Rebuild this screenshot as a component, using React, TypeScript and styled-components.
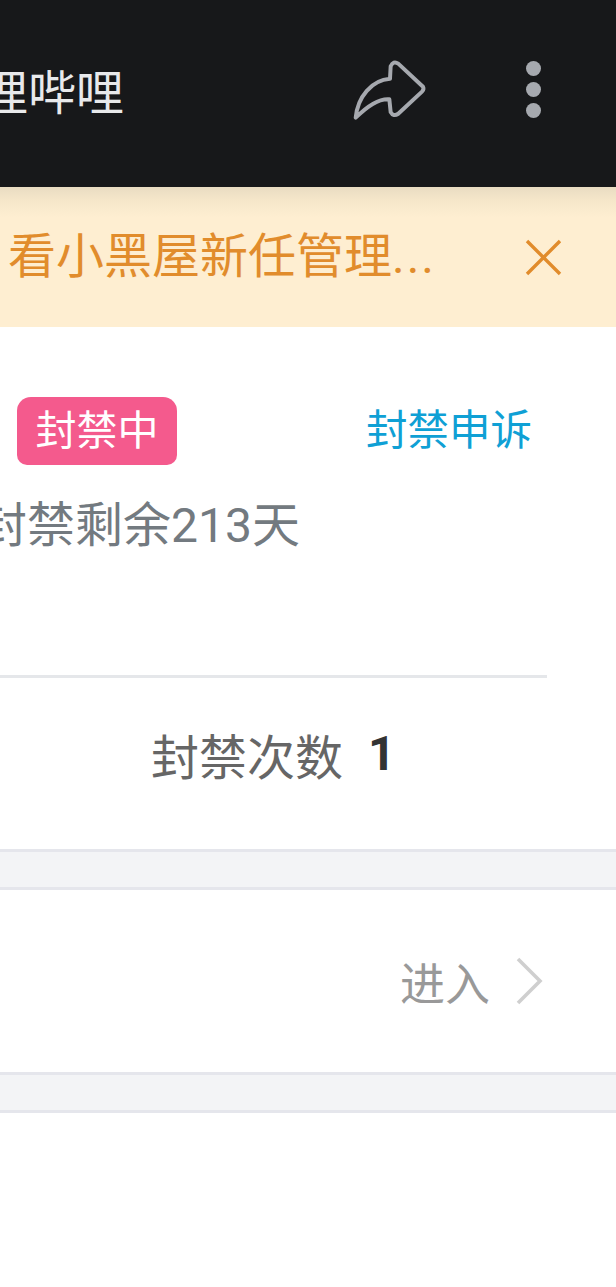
import React, { FC } from 'react';
import styled, { createGlobalStyle } from 'styled-components';

const GlobalStyle = createGlobalStyle`
  html, body {
    margin: 0;
    padding: 0;
    background: #fff;
    overflow: hidden;
  }
  body {
    font-family: Roboto, "Noto Sans CJK SC", sans-serif;
  }
`;

const Page = styled.div`
  width: 616px;
  height: 1287px;
  overflow: hidden;
  background: #fff;
`;

const Header = styled.div`
  display: flex;
  align-items: center;
  height: 187px;
  background: #17181a;
`;
const Title = styled.div`
  flex: none;
  width: 124px;
  display: flex;
  justify-content: flex-end;
  font-size: 48px;
  line-height: 60px;
  color: #e8e9eb;
  white-space: nowrap;
`;
const ShareIcon = styled.svg`
  flex: none;
  margin-left: 226px;
  margin-top: -8px;
  width: 80px;
  height: 66px;
`;
const MoreIcon = styled.div`
  flex: none;
  display: flex;
  flex-direction: column;
  gap: 6px;
  margin-left: 96px;
  margin-top: -8px;
`;
const Dot = styled.span`
  width: 15px;
  height: 15px;
  border-radius: 50%;
  background: #a6a9af;
`;

const Banner = styled.div`
  display: flex;
  align-items: center;
  height: 140px;
  padding: 0 54px 0 8px;
  box-sizing: border-box;
  background: linear-gradient(#e9dcc2 0, #f6e7ca 14px, #feeed1 30px);
`;
const BannerText = styled.div`
  flex: 1;
  font-size: 48px;
  line-height: 60px;
  color: #e18c2c;
  white-space: nowrap;
`;
const BannerDots = styled.span`
  letter-spacing: 2px;
`;
const CloseIcon = styled.svg`
  flex: none;
  width: 37px;
  height: 37px;
`;

const StatusRow = styled.div`
  display: flex;
  align-items: flex-start;
  justify-content: space-between;
  padding: 70px 84px 0 17px;
`;
const Tag = styled.div`
  width: 160px;
  height: 68px;
  border-radius: 14px 14px 10px 10px;
  background: #f45a8d;
  color: #fff;
  font-size: 41px;
  line-height: 68px;
  text-align: center;
`;
const Appeal = styled.div`
  font-size: 41.5px;
  line-height: 68px;
  color: #0fa0d5;
`;
const Remain = styled.div`
  margin: 27px 0 0 -21px;
  font-size: 48px;
  line-height: 68px;
  color: #737a80;
  white-space: nowrap;
`;
const Divider = styled.div`
  width: 547px;
  height: 3px;
  margin-top: 115px;
  background: #e5e7ea;
`;
const CountRow = styled.div`
  display: flex;
  align-items: center;
  height: 171px;
  box-sizing: border-box;
  padding: 0 0 20px 151px;
`;
const CountLabel = styled.span`
  font-size: 48px;
  color: #666;
`;
const CountValue = styled.span`
  margin-left: 25px;
  font-size: 48px;
  font-weight: 700;
  color: #333;
`;
const Band = styled.div`
  height: 35px;
  background: #f3f4f6;
  border-top: 3px solid #e5e6ec;
  border-bottom: 3px solid #e5e6ec;
`;
const EnterRow = styled.div`
  display: flex;
  align-items: center;
  justify-content: flex-end;
  height: 182px;
  padding-right: 73px;
`;
const EnterText = styled.span`
  font-size: 45px;
  color: #999;
`;
const Chevron = styled.svg`
  flex: none;
  width: 28px;
  height: 48px;
  margin-left: 25px;
`;

const App: FC = () => (
  <Page>
    <GlobalStyle />
    <Header>
      <Title>哔哩哔哩</Title>
      <ShareIcon viewBox="150 80 240 200" fill="none">
        <path
          d="M166 264C172 200 215 150 270 146L272 108Q280 90 295 100L370 170Q374 178 367 185L295 252Q280 262 272 247L268 208C235 205 200 230 166 264Z"
          stroke="#a6a9af"
          strokeWidth="12"
          strokeLinejoin="round"
        />
      </ShareIcon>
      <MoreIcon>
        <Dot />
        <Dot />
        <Dot />
      </MoreIcon>
    </Header>
    <Banner>
      <BannerText>
        看小黑屋新任管理<BannerDots>...</BannerDots>
      </BannerText>
      <CloseIcon viewBox="0 0 37 37" fill="none">
        <path d="M2 2L35 35M35 2L2 35" stroke="#e18c2c" strokeWidth="3.4" />
      </CloseIcon>
    </Banner>
    <StatusRow>
      <Tag>封禁中</Tag>
      <Appeal>封禁申诉</Appeal>
    </StatusRow>
    <Remain>封禁剩余213天</Remain>
    <Divider />
    <CountRow>
      <CountLabel>封禁次数</CountLabel>
      <CountValue>1</CountValue>
    </CountRow>
    <Band />
    <EnterRow>
      <EnterText>进入</EnterText>
      <Chevron viewBox="0 0 28 48" fill="none">
        <path d="M3 2L25 24L3 46" stroke="#cfcfcf" strokeWidth="3.6" />
      </Chevron>
    </EnterRow>
    <Band />
  </Page>
);

export default App;
